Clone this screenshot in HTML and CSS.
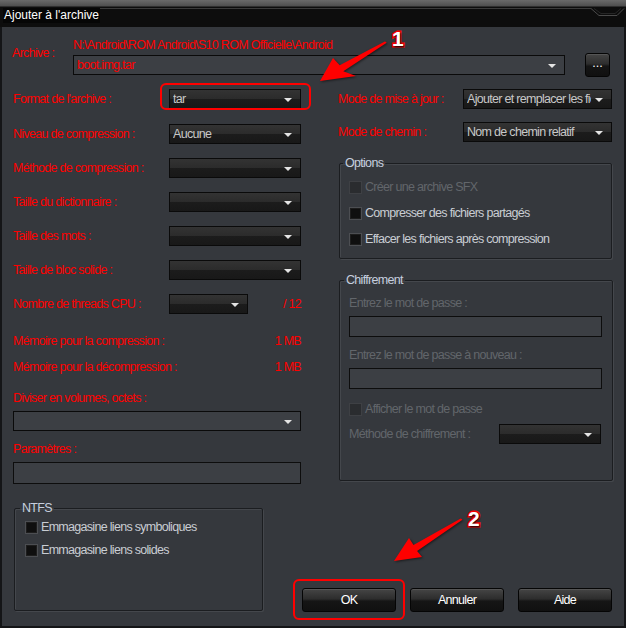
FILE: index.html
```html
<!DOCTYPE html>
<html lang="fr">
<head>
  <meta charset="UTF-8">
  <title>Ajouter à l'archive</title>
  <link rel="stylesheet" href="styles.css">
</head>
<body>
  <div class="window">
    <div class="titlebar">
      <span class="title">Ajouter à l'archive</span>
      <span class="rule"></span>
      <svg class="notch" width="34" height="20" viewBox="0 0 34 20">
        <polyline points="0,1.5 8,8.5 26,8.5 33,1.5" fill="none" stroke="#4a4a4a" stroke-width="1"/>
        <polyline points="3,1.5 10,6.5 24,6.5 30,1.5" fill="none" stroke="#262626" stroke-width="1"/>
      </svg>
    </div>

    <div class="body">
      <div class="archive">
        <span class="lbl archive-lbl">Archive :</span>
        <span class="path">N:\Android\ROM Android\S10 ROM Officielle\Android</span>
        <div class="combo edit archive-combo"><span class="val red">boot.img.tar</span></div>
        <div class="btn dots">...</div>
      </div>

      <div class="main">
        <div class="col-left">
          <div class="row first"><span class="lbl">Format de l'archive :</span><div class="combo"><span class="val">tar</span></div></div>
          <div class="row"><span class="lbl">Niveau de compression :</span><div class="combo"><span class="val">Aucune</span></div></div>
          <div class="row"><span class="lbl">Méthode de compression :</span><div class="combo"></div></div>
          <div class="row"><span class="lbl">Taille du dictionnaire :</span><div class="combo"></div></div>
          <div class="row"><span class="lbl">Taille des mots :</span><div class="combo"></div></div>
          <div class="row"><span class="lbl">Taille de bloc solide :</span><div class="combo"></div></div>
          <div class="row threads"><span class="lbl">Nombre de threads CPU :</span><div class="combo"></div><span class="lbl num">/ 12</span></div>

          <div class="mem first"><span class="lbl">Mémoire pour la compression :</span><span class="lbl">1 MB</span></div>
          <div class="mem"><span class="lbl">Mémoire pour la décompression :</span><span class="lbl">1 MB</span></div>

          <div class="lbl caption split">Diviser en volumes, octets :</div>
          <div class="combo edit wide"></div>
          <div class="lbl caption params">Paramètres :</div>
          <div class="field wide"></div>
        </div>

        <div class="col-right">
          <div class="rrow"><span class="lbl">Mode de mise à jour :</span><div class="combo"><span class="val">Ajouter et remplacer les fichiers</span></div></div>
          <div class="rrow second"><span class="lbl">Mode de chemin :</span><div class="combo"><span class="val">Nom de chemin relatif</span></div></div>

          <fieldset class="group options">
            <legend>Options</legend>
            <label class="check off"><span class="cb"></span>Créer une archive SFX</label>
            <label class="check"><span class="cb"></span>Compresser des fichiers partagés</label>
            <label class="check"><span class="cb"></span>Effacer les fichiers après compression</label>
          </fieldset>

          <fieldset class="group crypt">
            <legend>Chiffrement</legend>
            <div class="dim">Entrez le mot de passe :</div>
            <div class="field pw"></div>
            <div class="dim again">Entrez le mot de passe à nouveau :</div>
            <div class="field pw"></div>
            <label class="check off show"><span class="cb"></span>Afficher le mot de passe</label>
            <div class="method"><span class="dim">Méthode de chiffrement :</span><div class="combo"></div></div>
          </fieldset>
        </div>
      </div>

      <div class="bottom">
        <fieldset class="group ntfs">
          <legend>NTFS</legend>
          <label class="check"><span class="cb"></span>Emmagasine liens symboliques</label>
          <label class="check"><span class="cb"></span>Emmagasine liens solides</label>
        </fieldset>
        <div class="buttons">
          <div class="btn">OK</div>
          <div class="btn">Annuler</div>
          <div class="btn">Aide</div>
        </div>
      </div>
    </div>

    <!-- annotations -->
    <div class="mark mark-format"></div>
    <div class="mark mark-ok"></div>
    <span class="step step-1">1</span>
    <span class="step step-2">2</span>
    <svg class="arrows" width="626" height="628" viewBox="0 0 626 628">
      <polygon points="320,81 333,58 339.7,65.3 384.9,41.4 386.6,42.3 385.9,43.2 343.3,71.3 356,76" fill="#f00"/>
      <polygon points="394,561 409,538 413.5,544.9 460.7,518.5 462.4,519.4 461.7,520.3 417.1,550.9 422,557" fill="#f00"/>
    </svg>
  </div>
</body>
</html>
```

FILE: styles.css
```css
*{
  margin: 0;
  padding: 0;
  box-sizing: border-box;
}
body{
  background-color: #35383d;
  font-family: "Liberation Sans", Arial, sans-serif;
  font-size: 12.5px;
  letter-spacing: -0.7px;
}
.window{
  position: relative;
  width: 626px;
  height: 628px;
  overflow: hidden;
}

/* title bar */
.titlebar{
  display: flex;
  align-items: flex-start;
  height: 27px;
  background: linear-gradient(#6a6a6a 0, #4f4f4f 6px, #0d0d0d 7px);
}
.title{
  margin: 8px 0 0 3px;
  padding: 0 1px;
  height: 15px;
  line-height: 15px;
  background-color: #060606;
  color: #fff;
  font-size: 12px;
  letter-spacing: 0;
}
.rule{
  flex: 1;
  margin-top: 8px;
  border-top: 1px solid #3a3a3a;
}
.notch{
  margin: 7px 1px 0 0;
}

/* body */
.body{
  height: 601px;
  border: 2px solid #141517;
  border-top: 0;
  padding: 11px 12px 0 11px;
}
.lbl{
  color: #f00;
  line-height: 16px;
  white-space: nowrap;
}
.red{
  color: #f00;
}

.archive{
  display: grid;
  grid-template-columns: 60px 492px 20px 25px;
  grid-template-rows: 17px 21px;
}
.archive-lbl{
  grid-column: 1;
  grid-row: 1 / 3;
  margin-top: 7px;
  margin-left: -1px;
}
.path{
  grid-column: 2;
  grid-row: 1;
  color: #f00;
  line-height: 14px;
  white-space: nowrap;
}
.archive-combo{
  grid-column: 2;
  grid-row: 2;
  height: 21px;
}
.btn.dots{
  grid-column: 4;
  grid-row: 1 / 3;
  align-self: end;
  width: 25px;
  height: 24px;
  margin-bottom: -1px;
  line-height: 18px;
  letter-spacing: 0;
}

/* combos and fields */
.combo{
  position: relative;
  height: 20px;
  padding: 0 20px 0 3px;
  border: 1px solid #0a0a0a;
  background: linear-gradient(#333 0, #2b2b2b 50%, #1c1c1c 50%, #181818 100%);
  color: #c8c8c8;
  line-height: 18px;
  white-space: nowrap;
}
.combo .val{
  display: block;
  overflow: hidden;
}
.combo::after{
  content: "";
  position: absolute;
  right: 8px;
  top: 8px;
  border-left: 4px solid transparent;
  border-right: 4px solid transparent;
  border-top: 4px solid #e4e4e4;
}
.combo.edit{
  background: #3c3f44;
}
.field{
  height: 22px;
  border: 1px solid #0d0d0d;
  background-color: #3c3f44;
}

/* layout */
.main{
  display: grid;
  grid-template-columns: 288px 274px;
  column-gap: 37px;
  margin-top: 13px;
}
.row{
  display: grid;
  grid-template-columns: 156px 132px;
  align-items: center;
  height: 20px;
  margin-top: 14px;
}
.row.first{
  margin-top: 0;
}
.row.first + .row{
  margin-top: 15px;
}
.row.threads{
  grid-template-columns: 156px 79px 53px;
}
.num{
  text-align: right;
}
.mem{
  display: flex;
  justify-content: space-between;
  margin-top: 10px;
}
.mem.first{
  margin-top: 19px;
}
.caption.split{
  margin-top: 15px;
}
.caption + .wide{
  margin-top: 5px;
}
.caption.params{
  margin-top: 10px;
}

.rrow{
  display: grid;
  grid-template-columns: 125px 149px;
  align-items: center;
  height: 20px;
}
.rrow.second{
  margin-top: 13px;
}

/* group boxes */
.group{
  border: 1px solid #1b1d20;
  border-radius: 2px;
  box-shadow: 1px 1px 0 #44474c, inset 1px 1px 0 #44474c;
  min-inline-size: 0;
}
.group legend{
  padding: 0 2px;
  color: #c6cfdf;
  line-height: 14px;
}
.options{
  width: 273px;
  height: 103px;
  margin: 14px 0 0 1px;
  padding: 9px 0 0 9px;
}
.options legend{
  margin-left: -6px;
}
.options .check + .check{
  margin-top: 10px;
}
.crypt{
  width: 274px;
  height: 208px;
  margin: 14px 0 0 1px;
  padding: 8px 10px 0 9px;
}
.crypt legend{
  margin-left: -5px;
}
.dim{
  color: #62666b;
  line-height: 16px;
  white-space: nowrap;
}
.pw{
  height: 21px;
  margin-top: 5px;
}
.again{
  margin-top: 10px;
}
.show{
  margin-top: 12px;
}
.method{
  display: grid;
  grid-template-columns: 150px 102px;
  align-items: center;
  margin-top: 7px;
}

.check{
  display: flex;
  align-items: center;
  gap: 3px;
  height: 16px;
  color: #c9cdd3;
  white-space: nowrap;
}
.cb{
  width: 13px;
  height: 13px;
  border: 1px solid #4c4e52;
  background-color: #0f0f0f;
  box-shadow: inset 0 0 0 1px #1d1d1d;
}
.check.off{
  color: #62666b;
}
.check.off .cb{
  border-color: #3e4044;
  background-color: #2a2c2f;
  box-shadow: none;
}

/* bottom */
.bottom{
  display: flex;
  justify-content: space-between;
  align-items: flex-end;
  margin-top: 17px;
}
.ntfs{
  width: 249px;
  height: 110px;
  margin: 0 0 1px 1px;
  padding: 4px 0 0 10px;
}
.ntfs legend{
  margin-left: -5px;
}
.ntfs .check + .check{
  margin-top: 7px;
}
.buttons{
  display: flex;
  gap: 14px;
}
.btn{
  width: 94px;
  height: 24px;
  border: 1px solid #050505;
  border-radius: 3px;
  background: linear-gradient(#454545 0, #2d2d2d 45%, #151515 55%, #101010 100%);
  box-shadow: inset 0 1px 0 #555;
  color: #fff;
  text-align: center;
  line-height: 22px;
}

/* annotations */
.mark{
  position: absolute;
  border: 2px solid #f00;
  border-radius: 6px;
}
.mark-format{
  left: 160px;
  top: 83px;
  width: 151px;
  height: 27px;
}
.mark-ok{
  left: 293px;
  top: 579px;
  width: 112px;
  height: 41px;
}
.step{
  position: absolute;
  font-weight: bold;
  font-size: 21px;
  line-height: 20px;
  letter-spacing: 0;
  color: #fff;
  -webkit-text-stroke: 3px #f00;
  paint-order: stroke fill;
  text-shadow: 1px 1px 2px #000;
}
.step-1{
  left: 392px;
  top: 29px;
}
.step-2{
  left: 468px;
  top: 509px;
}
.arrows{
  position: absolute;
  left: 0;
  top: 0;
  pointer-events: none;
  filter: drop-shadow(1px 1px 1px rgba(0,0,0,0.5));
}
```
